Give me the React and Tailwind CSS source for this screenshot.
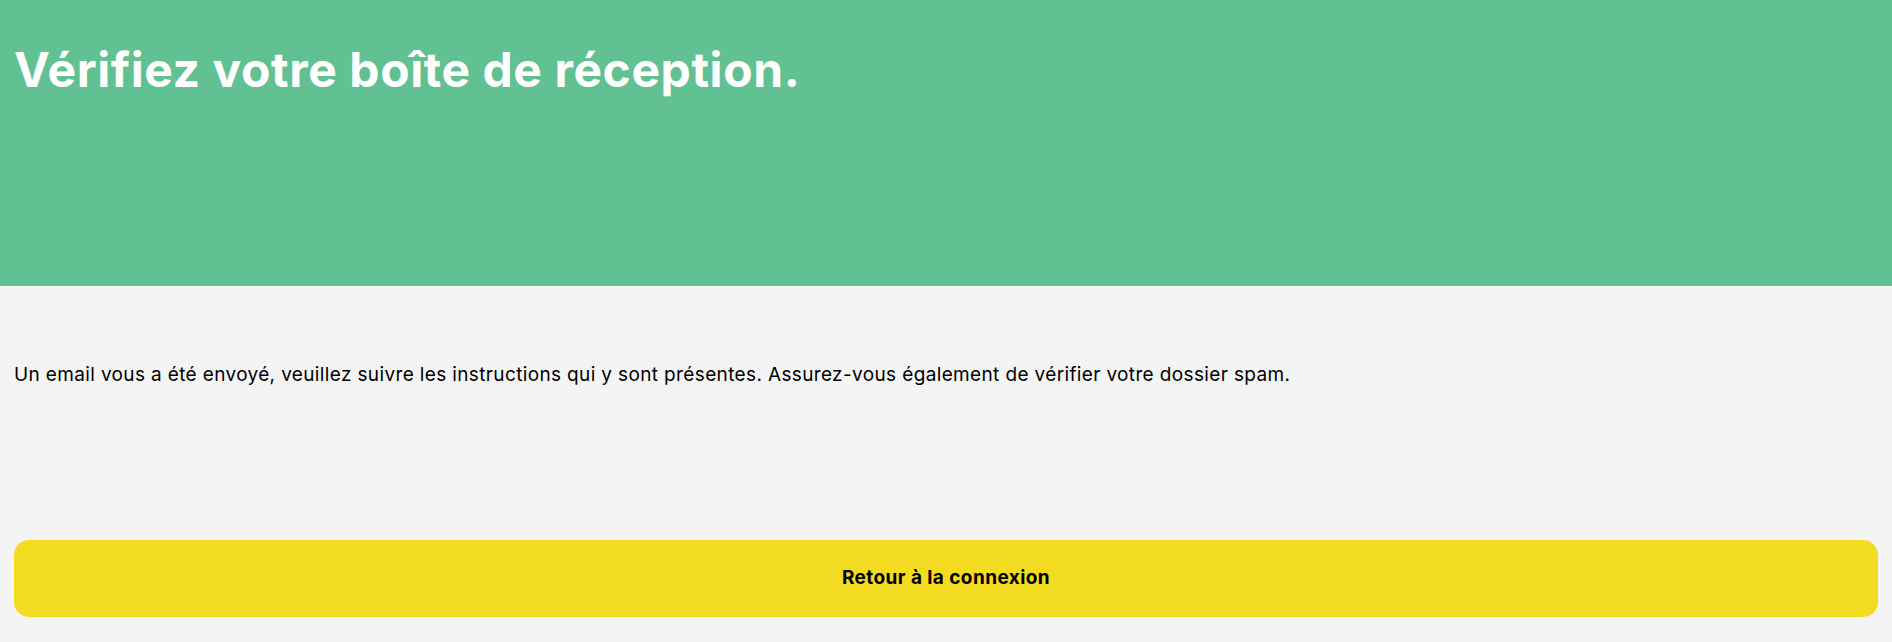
export default function App() {
  return (
    <div className="min-h-[642px] bg-[#f4f4f4] font-['Inter',sans-serif] text-black">
      <header className="h-[286px] bg-[#62c192] px-[14px] pt-[46px]">
        <h1 className="text-[48px] leading-[48px] font-bold tracking-[0.012em] text-white">
          Vérifiez votre boîte de réception.
        </h1>
      </header>
      <main className="px-[14px] pt-[75px] pb-[25px]">
        <p className="text-[19px] leading-[28px] tracking-[0.019em]">
          Un email vous a été envoyé, veuillez suivre les instructions qui y sont présentes. Assurez-vous également de vérifier votre dossier spam.
        </p>
        <button className="mt-[151px] flex h-[77px] w-full items-center justify-center rounded-[15px] bg-[#f3db22] text-[19px] font-bold tracking-[0.022em]">
          Retour à la connexion
        </button>
      </main>
    </div>
  );
}
